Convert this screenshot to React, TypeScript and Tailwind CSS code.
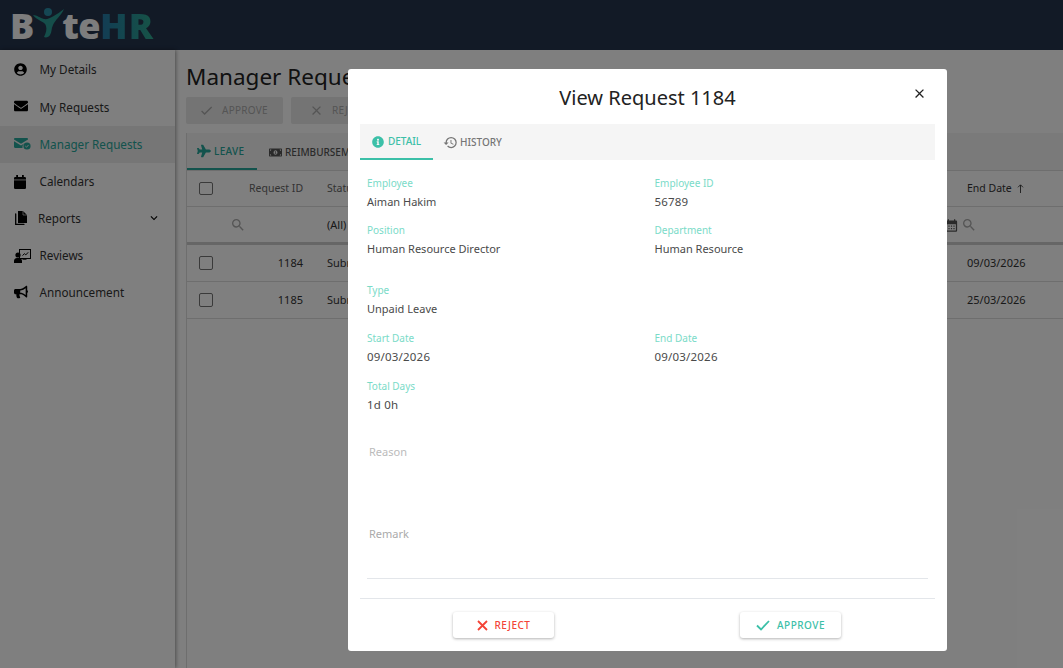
import React from "react";
import { FaBullhorn, FaEnvelope, FaInfoCircle, FaMoneyBillAlt, FaPlane, FaUserCircle } from "react-icons/fa";
import { MdCalendarMonth, MdCheck, MdClose, MdHistory, MdKeyboardArrowDown, MdSearch } from "react-icons/md";

const font = { fontFamily: '"Noto Sans", sans-serif' };

function ManagerIcon() {
  return (
    <svg width="17" height="12" viewBox="0 0 17 12">
      <path d="M0 1.200C0 .500.500 0 1.200 0h11.600c.7 0 1.200.500 1.200 1.200v.4L7 5.800 0 1.600z" fill="currentColor" />
      <path d="M0 3.200l7 4.200 4-2.400A5 5 0 0 0 8.500 10H1.200C.500 10 0 9.500 0 8.800z" fill="currentColor" />
      <circle cx="13" cy="8" r="3.600" fill="currentColor" />
      <path d="M11.300 8l1.200 1.200 2.100-2.300" fill="none" stroke="#ececec" strokeWidth="1" />
    </svg>
  );
}

function CalendarIcon() {
  return (
    <svg width="12" height="14" viewBox="0 0 12 14">
      <rect x="0" y="2" width="12" height="12" rx="1.200" fill="currentColor" />
      <rect x="2.200" y="0" width="1.800" height="3" fill="currentColor" />
      <rect x="8" y="0" width="1.800" height="3" fill="currentColor" />
      <rect x="0" y="4.600" width="12" height=".7" fill="#fff" />
    </svg>
  );
}

function ReportsIcon() {
  return (
    <svg width="13" height="15" viewBox="0 0 13 15">
      <path d="M4 0h5l4 4v8H4z" fill="currentColor" />
      <path d="M1.700 3v10.300H10" fill="none" stroke="currentColor" strokeWidth="1.300" strokeLinecap="round" />
      <path d="M9 0v4h4" fill="none" stroke="#fff" strokeWidth=".6" />
    </svg>
  );
}

function ReviewsIcon() {
  return (
    <svg width="17" height="14" viewBox="0 0 17 14">
      <rect x="5.500" y=".5" width="11" height="9" fill="none" stroke="currentColor" strokeWidth="1" />
      <path d="M8.500 6.500l2-1.800 1.300 1.200 2.400-2.600" fill="none" stroke="currentColor" strokeWidth="1" />
      <circle cx="4" cy="6" r="2.600" fill="currentColor" />
      <path d="M0 14v-2c0-2 1.500-3 3-3h2c1.500 0 3 1 3 3v2z" fill="currentColor" />
      <rect x="8.500" y="9.500" width="4" height="1.200" fill="currentColor" />
    </svg>
  );
}

function ThinArrowUp() {
  return (
    <svg width="7" height="9" viewBox="0 0 7 9" className="ml-[5px] mb-[1px]">
      <path d="M3.500 9V1M1 3.300L3.500.8 6 3.300" fill="none" stroke="currentColor" strokeWidth=".9" />
    </svg>
  );
}

// heavier cross and tick for the modal footer buttons
function BoldCross() {
  return (
    <svg width="11" height="11" viewBox="0 0 11 11">
      <path d="M1 1l9 9M10 1l-9 9" fill="none" stroke="currentColor" strokeWidth="1.800" />
    </svg>
  );
}

function BoldCheck() {
  return (
    <svg width="14" height="11" viewBox="0 0 14 11">
      <path d="M1 5.500l4 4 8-8.500" fill="none" stroke="currentColor" strokeWidth="1.800" />
    </svg>
  );
}

const navItems = [
  { label: "My Details", icon: <FaUserCircle size={13} className="-mt-[2px]" /> },
  { label: "My Requests", icon: <FaEnvelope size={14} className="-mt-[2px]" /> },
  { label: "Manager Requests", icon: <ManagerIcon />, active: true },
  { label: "Calendars", icon: <CalendarIcon /> },
  { label: "Reports", icon: <ReportsIcon />, arrow: true, narrow: true },
  { label: "Reviews", icon: <ReviewsIcon /> },
  { label: "Announcement", icon: <FaBullhorn size={14} className="-mt-[2px]" /> },
];

function Logo() {
  return (
    <div className="flex items-center pl-[10px] pt-[1px] text-[36px] font-extrabold leading-none" style={{ fontFamily: '"Open Sans", sans-serif' }}>
      <span className="text-[#fafafa]">B</span>
      <svg width="34" height="32" viewBox="0 0 34 32" className="-mx-[2px] -mt-[6px]">
        <circle cx="16" cy="5" r="4" fill="#2a8fa8" />
        <path d="M1 8c4 0 7 3 11 4 5 1 12-4 20-10-3 7-9 11-11 16-2 4-1 7-3 10-1 2-4 3-6 2 2-4 3-8 2-11C13 14 5 14 1 8z" fill="#2a9d94" />
      </svg>
      <span className="-ml-[2px] tracking-[-0.5px] text-[#fafafa]">te</span>
      <span className="bg-gradient-to-r from-[#2678a8] to-[#2fa88c] bg-clip-text pr-[1px] tracking-[1px] text-transparent">HR</span>
    </div>
  );
}

function Sidebar() {
  return (
    <aside className="w-[175px] shrink-0 bg-white pt-[1.500px] shadow-[1px_0_4px_rgba(0,0,0,0.4)]">
      {navItems.map((item) => (
        <div
          key={item.label}
          className={`flex h-[37.200px] items-center pl-[14px] pr-[14px] text-[11.700px] ${item.active ? "bg-[#ececec] text-[#26a69a]" : "text-[#333]"}`}
        >
          <span className={`flex shrink-0 items-center ${item.narrow ? "w-[24px]" : "w-[25.500px]"} ${item.active ? "text-[#26a69a]" : "text-black"}`}>{item.icon}</span>
          <span className="flex-1">{item.label}</span>
          {item.arrow && <MdKeyboardArrowDown size={14} className="-mt-[2px] text-black" />}
        </div>
      ))}
    </aside>
  );
}

function Checkbox() {
  return <span className="block h-[13.500px] w-[13.500px] rounded-[2px] border border-[#757575] bg-white" />;
}

function TableRow({ id, end }: { id: string; end: string }) {
  return (
    <div className="flex h-[37px] items-center border-b border-[#ddd] text-[11px] text-[#333]">
      <div className="w-[62px] pl-[12px]"><Checkbox /></div>
      <div className="w-[54px] text-right">{id}</div>
      <div className="ml-[24px] w-[640px]">Submitted</div>
      <div>{end}</div>
    </div>
  );
}

function Main() {
  return (
    <main className="flex min-w-0 flex-1 flex-col overflow-hidden pl-[11px] pt-[10px]">
      <h1 className="text-[22.500px] leading-[33px] text-[#222] whitespace-nowrap">Manager Requests</h1>
      <div className="mt-[4px] flex gap-2">
        <div className="flex h-[27px] w-[97px] items-center gap-[8px] rounded-[2px] bg-[#e8e8e8] pl-[13px] text-[10px] tracking-wide text-[#aaa]">
          <MdCheck size={15} /> APPROVE
        </div>
        <div className="flex h-[27px] w-[97px] items-center gap-[8px] rounded-[2px] bg-[#e8e8e8] pl-[18px] text-[10px] tracking-wide text-[#aaa]">
          <MdClose size={15} /> REJECT
        </div>
      </div>
      <div className="mt-[9px] flex-1 border-l border-[#ddd]">
        <div className="flex h-[37px] items-stretch bg-[#f5f5f5] text-[10px] font-medium">
          <div className="flex w-[70px] items-center justify-start gap-[3px] border-b-2 border-[#26a69a] pl-[10px] pt-[1px] tracking-[0.3px] text-[#26a69a]">
            <FaPlane size={14} /> LEAVE
          </div>
          <div className="flex items-center gap-[3px] whitespace-nowrap pl-[12px] pt-[1px] text-[#555]">
            <FaMoneyBillAlt size={13} /> REIMBURSEMENT
          </div>
        </div>
        <div className="flex h-[37px] items-center border-b border-[#ddd] border-t text-[10.500px] text-[#666]">
          <div className="w-[62px] pl-[12px]"><Checkbox /></div>
          <div className="w-[54px] whitespace-nowrap text-right">Request ID</div>
          <div className="ml-[24px] w-[640px]">Status</div>
          <div className="flex items-center text-[#333]">End Date<ThinArrowUp /></div>
        </div>
        <div className="flex h-[38px] items-center border-b-[3px] border-[#ccc] pt-[1px] text-[11px] text-[#333]">
          <div className="flex w-[59px] justify-end text-[#aaa]"><MdSearch size={16} /></div>
          <div className="w-[57px]" />
          <div className="ml-[24px] w-[617px]">(All)</div>
          <div className="flex w-[17px] text-[#555]"><MdCalendarMonth size={15} /></div>
          <div className="text-[#aaa]"><MdSearch size={16} /></div>
        </div>
        <TableRow id="1184" end="09/03/2026" />
        <TableRow id="1185" end="25/03/2026" />
      </div>
    </main>
  );
}

function Field({ label, value, className = "", digits = false }: { label: string; value: string; className?: string; digits?: boolean }) {
  return (
    <div className={className}>
      <div className="text-[10px] leading-[14px] text-[#7adbc8]">{label}</div>
      <div className={`mt-[4px] leading-[16px] text-[#4a4a4a] ${digits ? "text-[11.500px] tracking-[0.2px]" : "text-[11px]"}`}>{value}</div>
    </div>
  );
}

function ActionButton({ label, icon, color }: { label: string; icon: React.ReactNode; color: string }) {
  return (
    <div className={`flex h-[26px] w-[101px] items-center justify-center gap-[7px] rounded-[3px] bg-white pt-[1px] text-[10px] font-medium tracking-[0.5px] shadow-[0_1px_3px_rgba(0,0,0,0.3)] ${color}`}>
      {icon}
      {label}
    </div>
  );
}

function RequestModal() {
  return (
    <div className="absolute left-[348px] top-[69px] flex h-[582px] w-[599px] flex-col rounded-[3px] bg-white px-[12px]">
      <div className="relative flex h-[55px] shrink-0 items-center justify-center pt-[2px]">
        <h2 className="text-[20px] text-[#222]">View Request 1184</h2>
        <MdClose size={15} className="absolute right-[8px] top-[17px] text-[#222]" />
      </div>
      <div className="flex h-[36px] shrink-0 items-stretch bg-[#f5f5f5] text-[10px] font-medium">
        <div className="flex w-[73px] items-center justify-center gap-[4px] border-b-2 border-[#3cc0a8] pt-[1px] text-[#3cc0a8]">
          <FaInfoCircle size={12} /> DETAIL
        </div>
        <div className="flex items-center gap-[2px] pl-[10px] pt-[1px] text-[#757575]">
          <MdHistory size={15} /> HISTORY
        </div>
      </div>
      <div className="flex-1 px-[7px] pt-[16px]">
        <div className="grid grid-cols-[287.500px_1fr]">
          <Field label="Employee" value="Aiman Hakim" />
          <Field label="Employee ID" value="56789" digits />
          <Field label="Position" value="Human Resource Director" className="mt-[13px]" />
          <Field label="Department" value="Human Resource" className="mt-[13px]" />
          <Field label="Type" value="Unpaid Leave" className="col-span-2 mt-[26px]" />
          <Field label="Start Date" value="09/03/2026" digits className="mt-[14px]" />
          <Field label="End Date" value="09/03/2026" digits className="mt-[14px]" />
          <Field label="Total Days" value="1d 0h" digits className="col-span-2 mt-[14px]" />
        </div>
        <div className="mt-[31px] pl-[2px] text-[11px] leading-[16px] text-[#bbb]">Reason</div>
        <div className="mt-[66px] border-b border-[#e3e6ea] pb-[36px] pl-[2px] text-[11px] leading-[16px] text-[#aaa]">Remark</div>
      </div>
      <div className="flex h-[53.500px] shrink-0 items-start border-t border-[#e3e6ea] pl-[93px] pt-[13px]">
        <ActionButton label="REJECT" color="text-[#f44336]" icon={<BoldCross />} />
        <div className="w-[186px]" />
        <ActionButton label="APPROVE" color="text-[#3cc0a8]" icon={<BoldCheck />} />
      </div>
    </div>
  );
}

export default function App() {
  return (
    <div className="relative flex h-screen w-full flex-col overflow-hidden bg-white" style={font}>
      <header className="flex h-[50px] shrink-0 items-center bg-[#24344d]">
        <Logo />
      </header>
      <div className="flex min-h-0 flex-1">
        <Sidebar />
        <Main />
      </div>
      <div className="absolute inset-0 bg-black/50" />
      <RequestModal />
    </div>
  );
}
